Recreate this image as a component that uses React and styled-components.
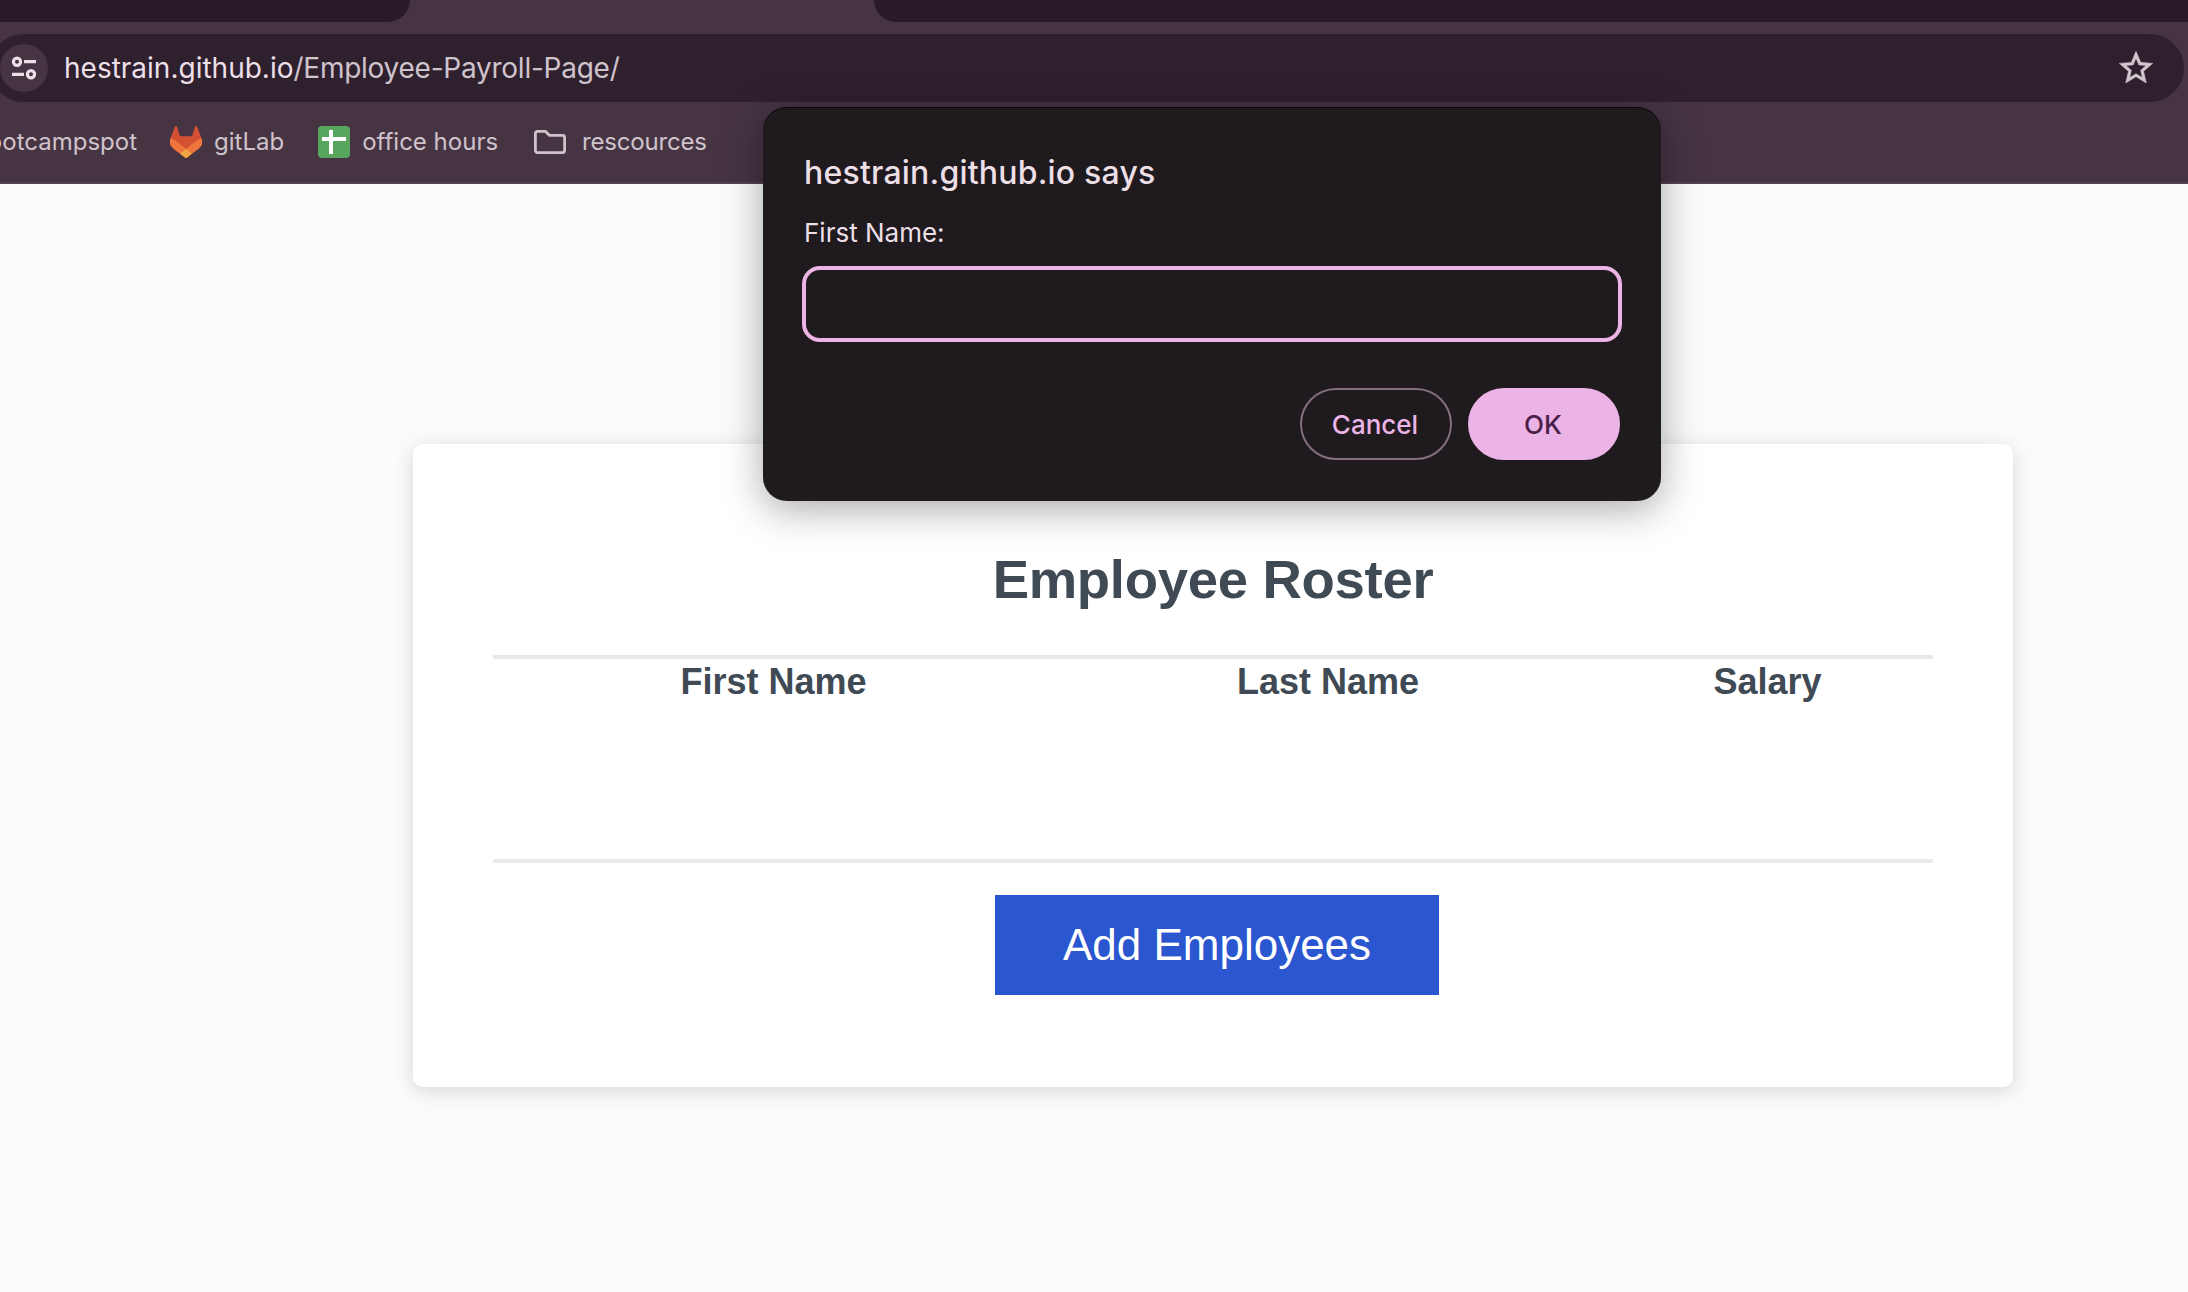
import React from "react";
import styled, { createGlobalStyle } from "styled-components";

const GlobalStyle = createGlobalStyle`
  * { box-sizing: border-box; }
  html, body { margin: 0; padding: 0; }
  body { background: #fafbfd; overflow: hidden; }
  button, input { font: inherit; margin: 0; }
`;

const Screen = styled.div`
  display: flex;
  flex-direction: column;
  width: 2188px;
  height: 1292px;
  overflow: hidden;
  position: relative;
`;

const BrowserChrome = styled.header`
  display: flex;
  flex-direction: column;
  height: 184px;
  background: #463443;
  border-bottom: 2px solid #51434e;
  font-family: Inter, "Liberation Sans", sans-serif;
`;

const TabStrip = styled.div`
  display: flex;
  justify-content: space-between;
  height: 22px;
`;

const InactiveTabs = styled.div`
  width: ${(p) => p.$width}px;
  background: #2a1b29;
  border-radius: ${(p) => (p.$side === "left" ? "0 0 24px 0" : "0 0 0 24px")};
`;

const AddressBar = styled.div`
  display: flex;
  align-items: center;
  height: 68px;
  margin: 12px 4px 0 -10px;
  padding: 0 28px 0 10px;
  border-radius: 34px;
  background: #2f202e;
`;

const SiteInfo = styled.button`
  display: flex;
  width: 48px;
  height: 48px;
  padding: 0;
  border: 0;
  border-radius: 50%;
  background: #463443;
`;

const Url = styled.div`
  flex: 1;
  margin-left: 16px;
  font-size: 28px;
  line-height: 40px;
  white-space: nowrap;
  color: #ecdfe8;
`;

const UrlPath = styled.span`
  color: #cfc3cc;
  letter-spacing: -0.25px;
`;

const Bookmarks = styled.nav`
  display: flex;
  align-items: center;
  height: 80px;
`;

const Bookmark = styled.div`
  display: flex;
  align-items: center;
  gap: ${(p) => p.$gap || 12}px;
  margin-left: ${(p) => p.$before || 0}px;
  font-size: 24px;
  line-height: 32px;
  letter-spacing: ${(p) => p.$spacing || 0}px;
  white-space: nowrap;
  color: #cfc3cc;

  svg { display: block; flex: none; }
`;

const ClippedBookmark = styled(Bookmark)`
  width: 137px;
  justify-content: flex-end;
  overflow: hidden;
`;

const Page = styled.main`
  flex: 1;
  display: flex;
  flex-direction: column;
  align-items: center;
  padding: 260px 0 0 238px;
  background: #fafbfd;
  font-family: "Liberation Sans", Arial, sans-serif;
  color: #3f4a54;
`;

const Card = styled.section`
  display: flex;
  flex-direction: column;
  width: 1600px;
  height: 643px;
  padding: 104px 80px 0;
  border-radius: 10px;
  background: #fff;
  box-shadow: 0 4px 20px rgba(0, 0, 0, 0.15);
`;

const Title = styled.h2`
  margin: 0;
  font-size: 54.5px;
  letter-spacing: -0.3px;
  line-height: 64px;
  font-weight: 700;
  text-align: center;
`;

const Roster = styled.div`
  height: 208px;
  margin-top: 43px;
  border-top: 4px solid #e7e9eb;
  border-bottom: 4px solid #e8e9ea;
`;

const RosterHead = styled.div`
  display: grid;
  grid-template-columns: 561px 548px 331px;
  padding-top: 2px;
  font-size: 36px;
  line-height: 42px;
  font-weight: 700;
  text-align: center;
`;

const AddButton = styled.button`
  align-self: center;
  width: 444px;
  height: 100px;
  margin: 32px 0 0 8px;
  padding: 0;
  border: 0;
  background: #2a56cf;
  color: #fff;
  font-size: 44px;
`;

const Prompt = styled.div`
  position: absolute;
  top: 107px;
  left: 763px;
  display: flex;
  flex-direction: column;
  width: 898px;
  height: 394px;
  padding: 46px 39px 0;
  border-radius: 24px;
  background: #1f1a1e;
  box-shadow: inset 0 1px 0 #0b080a, 0 8px 40px rgba(0, 0, 0, 0.34);
  font-family: Inter, "Liberation Sans", sans-serif;
  color: #ecdfe6;
`;

const PromptTitle = styled.div`
  padding-left: 2px;
  font-size: 32px;
  line-height: 40px;
  font-weight: 500;
  letter-spacing: 0.2px;
`;

const PromptLabel = styled.label`
  margin-top: 24px;
  padding-left: 2px;
  font-size: 26px;
  line-height: 32px;
`;

const PromptInput = styled.input`
  height: 76px;
  margin-top: 17px;
  padding: 0 20px;
  border: 4px solid #edb3e7;
  border-radius: 18px;
  outline: 0;
  background: transparent;
  color: inherit;
  font-size: 26px;
`;

const PromptActions = styled.div`
  display: flex;
  justify-content: flex-end;
  gap: 16px;
  margin-top: 46px;
  padding-right: 2px;
`;

const PromptButton = styled.button`
  width: 152px;
  height: 72px;
  padding: 0 2px 0 0;
  border: 2px solid ${(p) => (p.$primary ? "#ecb3e6" : "#836f7e")};
  border-radius: 36px;
  background: ${(p) => (p.$primary ? "#ecb3e6" : "transparent")};
  color: ${(p) => (p.$primary ? "#4a1f4a" : "#ecb3e6")};
  font-size: 26px;
  font-weight: 500;
`;

const TuneIcon = () => (
  <svg width="48" height="48" viewBox="0 0 48 48" fill="none" stroke="#ecdfe8" strokeWidth="3.2">
    <circle cx="17" cy="17.7" r="3.6" />
    <path d="M24 17.7h12M12 30.3h12" />
    <circle cx="31" cy="30.3" r="3.6" />
  </svg>
);

const StarIcon = () => (
  <svg width="40" height="40" viewBox="0 0 24 24" fill="#d2c6cf" stroke="#d2c6cf" strokeWidth="0.3">
    <path d="M22 9.24l-7.19-.62L12 2 9.19 8.63 2 9.24l5.46 4.73L5.82 21 12 17.27 18.18 21l-1.63-7.03L22 9.24zM12 15.4l-3.76 2.27 1-4.28-3.32-2.88 4.38-.38L12 6.1l1.71 4.04 4.38.38-3.32 2.88 1 4.28L12 15.4z" />
  </svg>
);

const GitlabIcon = () => (
  <svg width="32" height="32" viewBox="0.1 0 24.7 24" preserveAspectRatio="none">
    <path fill="#d35033" d="M24.507 9.5l-.034-.09L21.082.562a.896.896 0 00-1.694.091l-2.29 7.01H7.825L5.535.653a.898.898 0 00-1.694-.09L.451 9.411.416 9.5a6.297 6.297 0 002.09 7.278l.012.01.03.022 5.16 3.867 2.56 1.935 1.554 1.176a1.051 1.051 0 001.268 0l1.555-1.176 2.56-1.935 5.197-3.89.014-.01A6.297 6.297 0 0024.507 9.5z" />
    <path fill="#ee763c" d="M24.507 9.5l-.034-.09a11.44 11.44 0 00-4.56 2.051l-7.447 5.632 4.742 3.584 5.197-3.89.014-.01A6.297 6.297 0 0024.507 9.5z" />
    <path fill="#f2a545" d="M7.707 20.677l2.56 1.935 1.555 1.176a1.051 1.051 0 001.268 0l1.555-1.176 2.56-1.935-4.743-3.584-4.755 3.584z" />
    <path fill="#ee763c" d="M5.01 11.461a11.43 11.43 0 00-4.56-2.05L.416 9.5a6.297 6.297 0 002.09 7.278l.012.01.03.022 5.16 3.867 4.745-3.584-7.444-5.632z" />
  </svg>
);

const SheetIcon = () => (
  <svg width="32" height="32" viewBox="0 0 32 32">
    <rect width="32" height="32" rx="4" fill="#58a55d" />
    <path d="M4 11h7V4h4v7h13v4H15v13h-4V15H4z" fill="#fff" />
  </svg>
);

const FolderIcon = () => (
  <svg width="32" height="24" viewBox="0 0 32 24" fill="none" stroke="#cfc3cc" strokeWidth="2.8" strokeLinejoin="round">
    <path d="M3.4 1.4H11.6L15.6 5.4H28.6a2 2 0 0 1 2 2V20.6a2 2 0 0 1-2 2H3.4a2 2 0 0 1-2-2V3.4a2 2 0 0 1 2-2Z" />
  </svg>
);

export default function App() {
  return (
    <Screen>
      <GlobalStyle />
      <BrowserChrome>
        <TabStrip>
          <InactiveTabs $side="left" $width={410} />
          <InactiveTabs $side="right" $width={1314} />
        </TabStrip>
        <AddressBar>
          <SiteInfo aria-label="Site information"><TuneIcon /></SiteInfo>
          <Url>hestrain.github.io<UrlPath>/Employee-Payroll-Page/</UrlPath></Url>
          <StarIcon />
        </AddressBar>
        <Bookmarks>
          <ClippedBookmark>bootcampspot</ClippedBookmark>
          <Bookmark $before={33}><GitlabIcon />gitLab</Bookmark>
          <Bookmark $before={34}><SheetIcon />office hours</Bookmark>
          <Bookmark $before={36} $gap={16} $spacing={-0.2}><FolderIcon />rescources</Bookmark>
        </Bookmarks>
      </BrowserChrome>
      <Page>
        <Card>
          <Title>Employee Roster</Title>
          <Roster>
            <RosterHead>
              <span>First Name</span>
              <span>Last Name</span>
              <span>Salary</span>
            </RosterHead>
          </Roster>
          <AddButton>Add Employees</AddButton>
        </Card>
      </Page>
      <Prompt role="dialog">
        <PromptTitle>hestrain.github.io says</PromptTitle>
        <PromptLabel htmlFor="first-name">First Name:</PromptLabel>
        <PromptInput id="first-name" />
        <PromptActions>
          <PromptButton>Cancel</PromptButton>
          <PromptButton $primary>OK</PromptButton>
        </PromptActions>
      </Prompt>
    </Screen>
  );
}
